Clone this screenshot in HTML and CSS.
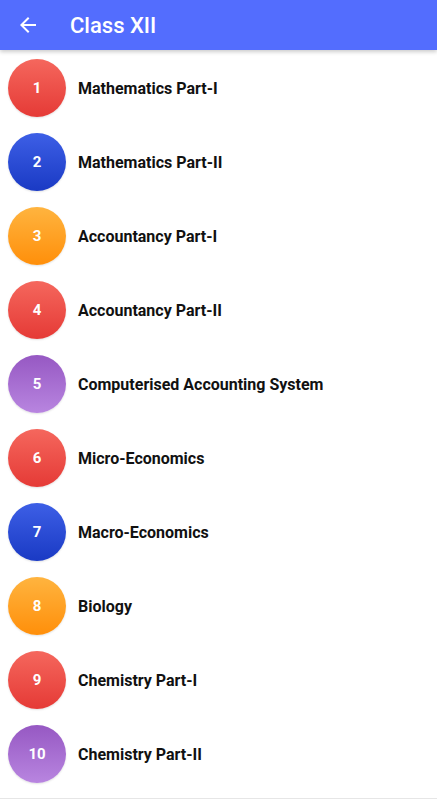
FILE: index.html
```html
<!DOCTYPE html>
<html lang="en">
<head>
    <meta charset="UTF-8">
    <link rel="stylesheet" href="styles.css">
</head>
<body>
    <div class="toolbar">
        <svg class="back" width="24" height="24" viewBox="0 0 24 24">
            <path d="M20 11H7.83l5.59-5.59L12 4l-8 8 8 8 1.41-1.41L7.83 13H20v-2z" fill="#fff"/>
        </svg>
        <span class="title">Class XII</span>
    </div>

    <ul class="subjects">
        <li class="row"><span class="badge red">1</span><span class="name">Mathematics Part-I</span></li>
        <li class="row"><span class="badge blue">2</span><span class="name">Mathematics Part-II</span></li>
        <li class="row"><span class="badge orange">3</span><span class="name">Accountancy Part-I</span></li>
        <li class="row"><span class="badge red">4</span><span class="name">Accountancy Part-II</span></li>
        <li class="row"><span class="badge purple">5</span><span class="name">Computerised Accounting System</span></li>
        <li class="row"><span class="badge red">6</span><span class="name">Micro-Economics</span></li>
        <li class="row"><span class="badge blue">7</span><span class="name">Macro-Economics</span></li>
        <li class="row"><span class="badge orange">8</span><span class="name">Biology</span></li>
        <li class="row"><span class="badge red">9</span><span class="name">Chemistry Part-I</span></li>
        <li class="row"><span class="badge purple">10</span><span class="name">Chemistry Part-II</span></li>
    </ul>
</body>
</html>
```

FILE: styles.css
```css
body {
    margin: 0;
    font-family: Roboto, 'Liberation Sans', sans-serif;
    background-color: #fff;
    height: 800px;
    overflow: hidden;
}

.toolbar {
    height: 50px;
    background-color: #536dfe;
    display: flex;
    align-items: center;
    padding-left: 16px;
    box-shadow: 0 2px 4px rgba(0, 0, 0, 0.2);
    position: relative;
}

.back {
    display: block;
}

.title {
    color: #fff;
    font-size: 22px;
    font-weight: 500;
    margin-left: 30px;
}

.subjects {
    list-style: none;
    margin: 0;
    padding: 1px 0 0 0;
    border-bottom: 1px solid #e6e6e6;
    height: 747px;
}

.row {
    height: 74px;
    display: flex;
    align-items: center;
    padding-left: 8px;
}

.badge {
    width: 58px;
    height: 58px;
    border-radius: 50%;
    display: flex;
    align-items: center;
    justify-content: center;
    color: #fff;
    font-size: 15px;
    font-weight: 700;
    flex-shrink: 0;
    box-shadow: 0 1px 2px rgba(0, 0, 0, 0.12);
}

.red {
    background: linear-gradient(#f5675d, #e53a36);
}

.blue {
    background: linear-gradient(#3d5fe6, #1a3ac4);
}

.orange {
    background: linear-gradient(#ffb43f, #ff8f0a);
}

.purple {
    background: linear-gradient(#9658c3, #b885e0);
}

.name {
    margin-left: 12px;
    font-size: 16px;
    font-weight: 700;
    color: #111;
}
```
